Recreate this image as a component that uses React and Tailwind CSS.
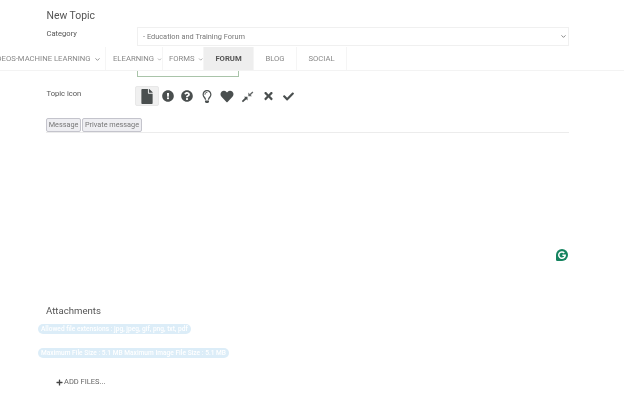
import {
  FaFile,
  FaExclamationCircle,
  FaQuestionCircle,
  FaRegLightbulb,
  FaHeart,
  FaTimes,
  FaCheck,
  FaPlus,
} from "react-icons/fa";
import { ChevronDown } from "lucide-react";

const CompressIcon = () => (
  <svg viewBox="0 0 16 16" className="w-[13px] h-[13px]" fill="#4a4f4f">
    <path d="M1 13.6 5 9.6 3.600 8.400H8v4.400L6.600 11.400 2.400 15z" />
    <path d="M9 3.200V7.600h4.400L12 6.200 15.200 3 14 1.800 10.800 5z" opacity="0.85" />
  </svg>
);

const GrammarlyIcon = () => (
  <svg viewBox="0 0 12 12" className="w-[12px] h-[12px]">
    <path d="M6 0a6 6 0 1 1 0 12H1.200A1.200 1.200 0 0 1 0 10.800V6a6 6 0 0 1 6-6z" fill="#15835f" />
    <path d="M8.300 3.900A3.200 3.200 0 1 0 9.200 6.200H6.400" fill="none" stroke="#fff" strokeWidth="1.500" />
  </svg>
);

const navItems = [
  { label: "VIDEOS-MACHINE LEARNING", menu: true, width: "w-[121px] -ml-[15px] justify-center" },
  { label: "ELEARNING", menu: true, width: "w-[57px] pl-[7px]" },
  { label: "FORMS", menu: true, width: "w-[41px] pl-[6px]" },
  { label: "FORUM", active: true, width: "w-[50px] justify-center" },
  { label: "BLOG", width: "w-[43px] justify-center" },
  { label: "SOCIAL", width: "w-[50px] justify-center" },
];

const App = () => {
  return (
    <div className="relative w-[624px] h-[403px] overflow-hidden bg-white text-[#555] font-['Roboto',sans-serif] blur-[0.4px]">
      <div className="pl-[46px] pr-[55px] pt-[9px]">
        <h1 className="text-[10.400px] leading-[13px] text-[#555] pl-[0.500px]">New Topic</h1>

        <div className="flex mt-[5px]">
          <label className="w-[91px] text-[7.600px] leading-[11px] mt-[1px] pl-[0.500px]">Category</label>
          <div className="flex-1 h-[19px] flex items-center justify-between pl-[5px] pr-0 border border-[#f0f0f0] text-[7.400px] text-[#777]">
            <span>- Education and Training Forum</span>
            <ChevronDown className="w-[7px] h-[7px] mr-[1px]" strokeWidth={3} />
          </div>
        </div>

        {/* title input, mostly hidden by the sticky menu */}
        <div className="ml-[91px] mt-[10px] w-[102px] h-[21px] border border-[#a9c4a9]" />

        <div className="flex items-center mt-[9px]">
          <span className="w-[89px] text-[7.600px] -mt-[4px] pl-[0.500px]">Topic icon</span>
          <div className="flex items-center text-[#4a4f4f]">
            <button className="w-[24px] h-[20px] flex items-center justify-center bg-[#f0f0f0] border border-[#e8e8e8] rounded-[2px]">
              <FaFile className="w-[12px] h-[15px]" />
            </button>
            <span className="w-[19px] flex justify-center ml-[-1px]"><FaExclamationCircle className="w-[12px] h-[12px]" /></span>
            <span className="w-[20px] flex justify-center"><FaQuestionCircle className="w-[12px] h-[12px]" /></span>
            <span className="w-[19px] flex justify-center"><FaRegLightbulb className="w-[10px] h-[13px]" /></span>
            <span className="w-[21px] flex justify-center"><FaHeart className="w-[14px] h-[13px]" /></span>
            <span className="w-[21px] flex justify-center"><CompressIcon /></span>
            <span className="w-[20px] flex justify-center"><FaTimes className="w-[11px] h-[12px]" /></span>
            <span className="w-[21px] flex justify-center"><FaCheck className="w-[13px] h-[11px]" /></span>
          </div>
        </div>

        <div className="flex mt-[12px] border-b border-[#ececec]">
          <button className="w-[35px] h-[14px] text-[7.300px] leading-[12px] text-[#777] bg-[#eeeef2] border border-[#c4c4cc] rounded-[2px]">
            Message
          </button>
          <button className="w-[60px] ml-[1px] h-[14px] text-[7.300px] leading-[12px] text-[#777] bg-[#eeeef2] border border-[#c4c4cc] rounded-[2px]">
            Private message
          </button>
        </div>
      </div>

      <div className="pl-[38px] mt-[171px]">
        <h2 className="ml-[8px] text-[9.600px] leading-[13px] text-[#555]">Attachments</h2>
        <div className="mt-[7px] flex flex-col items-start gap-[14px]">
          <span className="h-[10px] px-[3px] rounded-full bg-[#dcedf8] text-white text-[6.600px] leading-[10px] font-medium">
            Allowed file extensions : jpg, jpeg, gif, png, txt, pdf
          </span>
          <span className="h-[10px] px-[3px] rounded-full bg-[#dcedf8] text-white text-[6.600px] leading-[10px] font-medium">
            Maximum File Size : 5.1 MB Maximum Image File Size : 5.1 MB
          </span>
        </div>
        <div className="ml-[18px] mt-[19px] flex items-center gap-[1px] text-[7.500px] leading-[10px] text-[#666]">
          <FaPlus className="w-[7px] h-[7px] text-[#444]" />
          <span>ADD FILES...</span>
        </div>
      </div>

      {/* sticky menu over the form */}
      <nav className="absolute left-0 right-0 top-[47px] h-[24px] flex bg-white border-b border-[#f3f3f3] text-[7.700px] text-[#888]">
        {navItems.map((item) => (
          <div
            key={item.label}
            className={`${item.width} shrink-0 flex items-center gap-[3px] pt-[1px] whitespace-nowrap border-r border-[#f5f5f5] ${
              item.active ? "bg-[#eeeeee] font-bold text-[#555]" : ""
            }`}
          >
            <span>{item.label}</span>
            {item.menu && <ChevronDown className="w-[7px] h-[7px]" strokeWidth={3} />}
          </div>
        ))}
      </nav>

      {/* grammarly badge */}
      <div className="absolute left-[556px] top-[249px]">
        <GrammarlyIcon />
      </div>
    </div>
  );
};

export default App;
